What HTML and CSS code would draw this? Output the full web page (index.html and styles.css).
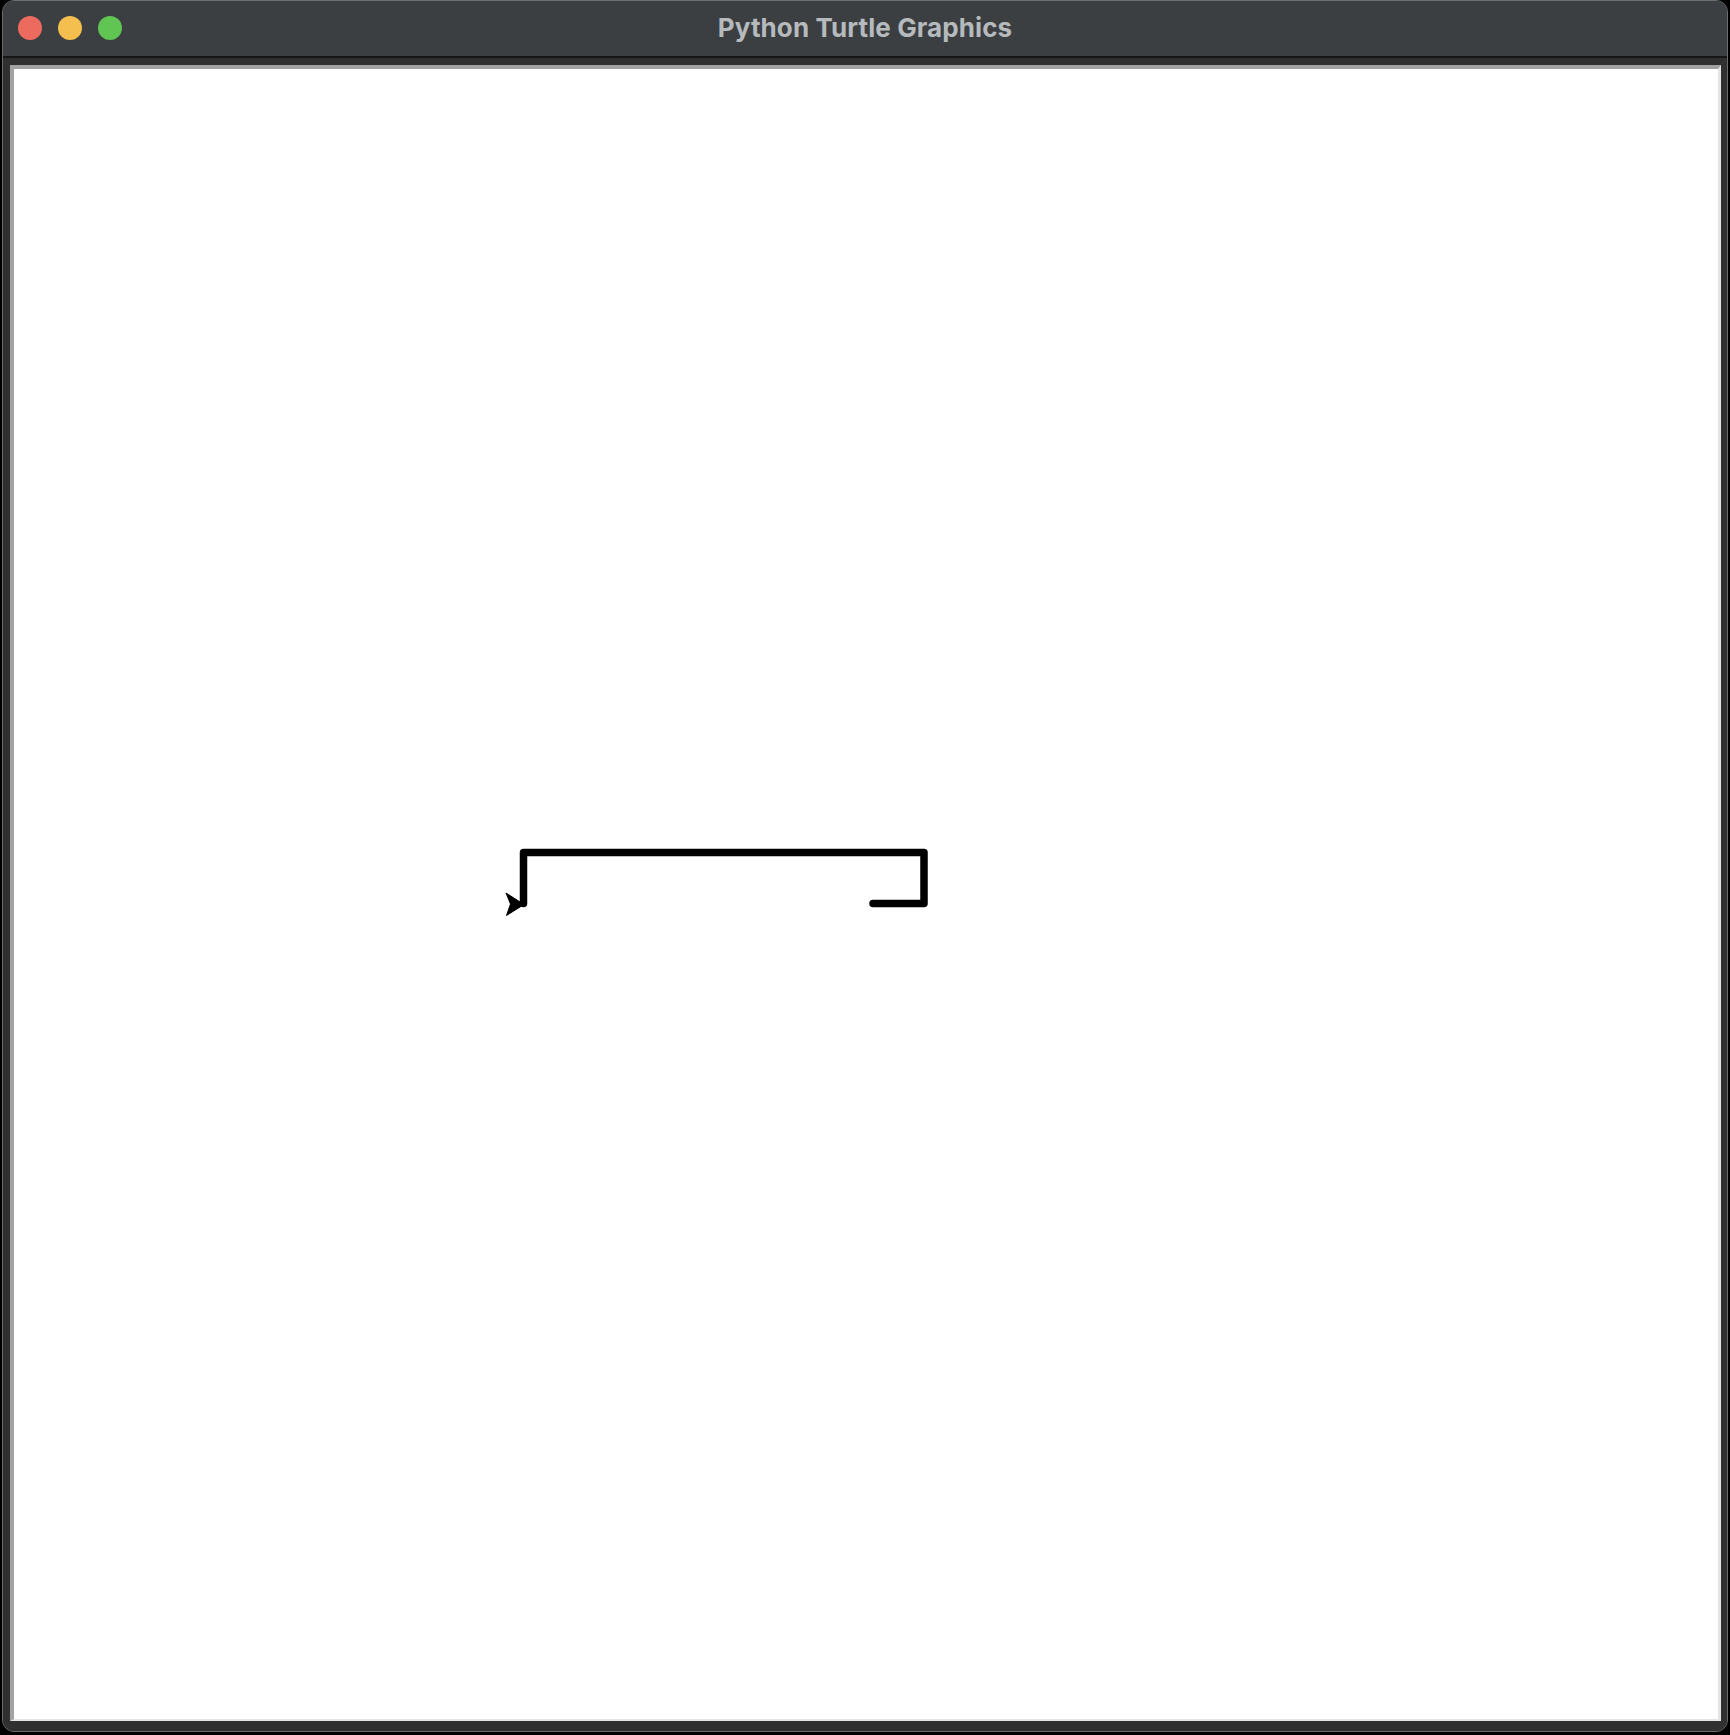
FILE: index.html
```html
<!DOCTYPE html>
<html lang="en">
<head>
<meta charset="utf-8">
<title>Python Turtle Graphics</title>
<link rel="stylesheet" href="styles.css">
</head>
<body>
<div class="window">
  <div class="titlebar">
    <div class="lights">
      <span class="light red"></span>
      <span class="light yellow"></span>
      <span class="light green"></span>
    </div>
    <div class="title">Python Turtle Graphics</div>
  </div>
  <div class="frame">
    <div class="canvas">
      <svg class="drawing" width="1704" height="1650" viewBox="14 69 1704 1650" xmlns="http://www.w3.org/2000/svg">
        <path d="M873 903.5 L924 903.5 L924 852.5 L523.5 852.5 L523.5 903.5" fill="none" stroke="#000" stroke-width="7.5" stroke-linecap="round" stroke-linejoin="round"/>
        <polygon points="524,904.5 506,893 510.5,904 506.5,915.5" fill="#000" stroke="#000" stroke-width="1" stroke-linejoin="miter"/>
      </svg>
    </div>
  </div>
</div>
</body>
</html>
```

FILE: styles.css
```css
html, body {
  margin: 0;
  padding: 0;
  background: #000;
}

body {
  width: 1730px;
  height: 1735px;
  overflow: hidden;
}

.window {
  margin-left: 2px;
  width: 1726px;
  height: 1732px;
  box-sizing: border-box;
  border: 1px solid #6a6c6e;
  border-radius: 12px;
  overflow: hidden;
  background: #303030;
  display: flex;
  flex-direction: column;
}

.titlebar {
  height: 55px;
  flex: 0 0 55px;
  background: #3b3f42;
  border-bottom: 2px solid #161616;
  position: relative;
  display: flex;
  align-items: center;
  justify-content: center;
}

.lights {
  position: absolute;
  left: 15px;
  top: 15px;
  display: flex;
  gap: 16px;
}

.light {
  width: 24px;
  height: 24px;
  border-radius: 50%;
  display: block;
}

.red { background: #ed6a5e; }
.yellow { background: #f4bf4f; }
.green { background: #61c554; }

.title {
  font-family: Inter, "Liberation Sans", sans-serif;
  font-weight: 700;
  font-size: 26px;
  color: #b6babd;
  margin-top: -2px;
  letter-spacing: 0.1px;
}

.frame {
  flex: 1 1 auto;
  padding: 7px 6px 10px 7px;
  background: #303030;
}

.canvas {
  width: 1704px;
  height: 1650px;
  background: #fff;
  border-top: 4px solid #a2a2a2;
  border-left: 4px solid #a2a2a2;
  border-right: 3px solid #e4e4e4;
  border-bottom: 2px solid #e4e4e4;
}

.drawing {
  display: block;
}
```
